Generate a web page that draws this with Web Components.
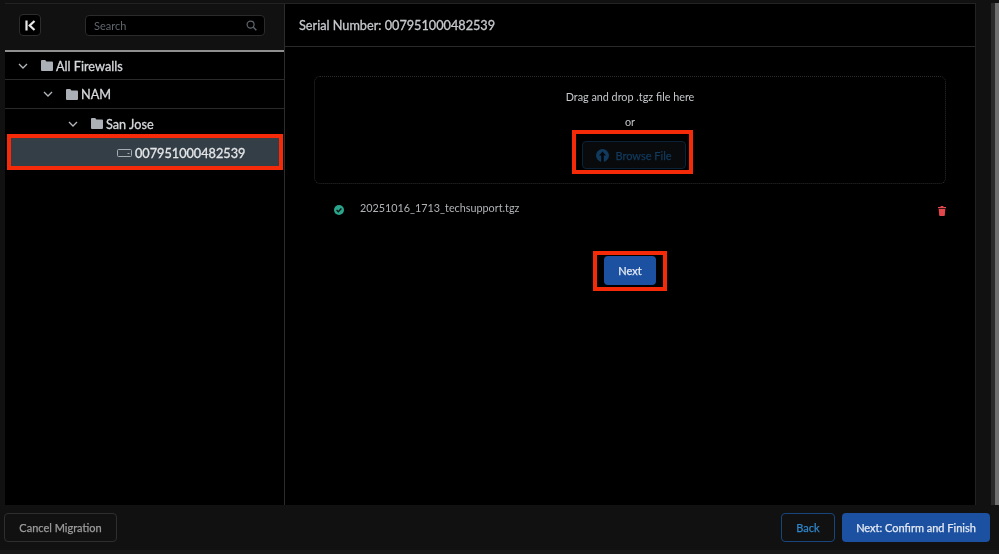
<!DOCTYPE html>
<html><head><meta charset="utf-8"><title>Migration</title>
<style>
html,body{margin:0;height:100%;background:#111}
body{font-family:Lato,"Noto Sans",sans-serif;overflow:hidden}
</style></head><body>
<migration-app></migration-app>
<script>
const def=(name,html,init)=>{customElements.define(name,class extends HTMLElement{
  constructor(){super();this.attachShadow({mode:'open'}).innerHTML=html;}
  connectedCallback(){init&&init(this)}
})};
const FOLDER='<svg width="12" height="11" viewBox="0 0 12 11"><path fill="#aab0b6" d="M0 1.2C0 .5.5 0 1.2 0h3l1.2 1.5h5.400c.7 0 1.200.5 1.200 1.200v7c0 .7-.5 1.300-1.200 1.300H1.200C.5 11 0 10.400 0 9.700z"/></svg>';
const CHEV='<svg width="10" height="6" viewBox="0 0 10 6"><path d="M1 1l4 4 4-4" fill="none" stroke="#b4b8bc" stroke-width="1.300"/></svg>';

def('tree-row',`<style>
:host{display:flex;align-items:center;height:28px;border-bottom:1px solid #2a2a2a;color:#d6d9dc;font-size:12.700px;-webkit-text-stroke:.3px currentColor}
:host([selected]){background:#343e46;border-bottom:0;color:#e4e6e8;margin:0 5px 0 6px;height:26px;padding-top:2px}
.chev{width:10px;display:flex;margin-right:13px}
.ico{display:flex;margin-right:3px}
</style><span class="chev"><slot name="chev"></slot></span><span class="ico"><slot name="icon"></slot></span><slot></slot>`,
el=>{el.style.paddingLeft=el.getAttribute('indent')+'px'});

def('tree-panel',`<style>
:host{display:flex;flex-direction:column;width:279px;flex:none;border-right:1px solid #2c2c2c;background:#000}
header{display:flex;align-items:center;height:42px;padding-bottom:4px;background:#111;border-bottom:2px solid #8f8f8f;padding-left:14px;gap:44px}
.k{width:20px;height:20px;background:#000;border:1px solid #2c2c2c;border-radius:4px;display:flex;align-items:center;justify-content:center}
.s{width:180px;height:21px;box-sizing:border-box;background:#000;border:1px solid #2b2b2b;border-radius:4px;display:flex;align-items:center;justify-content:space-between;padding:0 7px 0 8px;color:#5f666c;font-size:11px}
</style>
<header>
<span class="k"><svg width="11" height="11" viewBox="0 0 11 11"><path d="M1.500 .5v10" stroke="#e8e8e8" stroke-width="2.200"/><path d="M9.500 1L4.700 5.500l4.800 4.500" fill="none" stroke="#e8e8e8" stroke-width="2.200"/></svg></span>
<span class="s">Search<svg width="11" height="11" viewBox="0 0 12 12"><circle cx="5" cy="5" r="3.800" fill="none" stroke="#5f666c" stroke-width="1.300"/><path d="M8 8l3.300 3.300" stroke="#5f666c" stroke-width="1.500"/></svg></span>
</header>
<slot></slot>`);

def('ui-button',`<style>
:host{display:inline-flex;align-items:center;justify-content:center;gap:6px;box-sizing:border-box;height:29px;border-radius:4px;font-size:11px;white-space:nowrap;border:1px solid transparent;-webkit-text-stroke:.25px currentColor}
:host([kind=primary]){background:#1c50a0;color:#e4eaf4}
:host([kind=outline]){border-color:#17467c;color:#2f85c8}
:host([kind=ghost]){border-color:#2e2e2e;color:#9c9c9c}
:host([kind=disabled]){border-color:#0c2238;color:#123a5e;background:#080a0c;height:28px}
</style><slot></slot>`);

def('upload-zone',`<style>
:host{display:flex;flex-direction:column;align-items:center;box-sizing:border-box;height:108px;margin:0 29px 0 29px;border:1px dotted #2c2c2c;border-radius:6px;color:#c6c9cc;font-size:10.800px;padding-top:13px}
p{margin:0;line-height:14px}
.or{margin-top:11px}
.b{margin-top:12px;transform:translateX(4px)}
</style><p>Drag and drop .tgz file here</p><p class="or">or</p><div class="b"><slot></slot></div>`);

def('file-row',`<style>
:host{display:flex;align-items:center;height:14px;margin:18px 29px 0 49px;color:#b0b3b6;font-size:10.800px}
.t{flex:1;margin-left:16px;position:relative;top:-2px}
svg{flex:none;position:relative;top:1px}
</style><svg width="10" height="10" viewBox="0 0 10 10"><circle cx="5" cy="5" r="5" fill="#2aa58c"/><path d="M2.600 5l1.700 1.700 3.100-3.200" fill="none" stroke="#061512" stroke-width="1.400"/></svg><span class="t"><slot></slot></span>
<svg width="8" height="10" viewBox="0 0 8 10" style="top:2px"><path fill="#e2474c" d="M2.800 0h2.400l.4 1H8v1.200H0V1h2.400zM.7 3h6.600l-.5 6.300c0 .4-.3.7-.7.700H1.900c-.4 0-.7-.3-.7-.7z"/></svg>`);

def('red-mark',`<style>:host{position:absolute;box-sizing:border-box;border:4px solid #f52a08;pointer-events:none}</style>`,
el=>{const [x,y,w,h]=el.getAttribute('box').split(',');Object.assign(el.style,{left:x+'px',top:y+'px',width:w+'px',height:h+'px'})});

def('migration-app',`<style>
:host{display:flex;flex-direction:column;position:relative;width:999px;height:554px;background:#111;overflow:hidden;filter:blur(.3px)}
.top{display:flex;height:502px;margin-top:3px;flex:none}
.win{display:flex;width:971px;margin-left:5px;background:#000;border-top:1px solid #222;border-right:1px solid #222;box-sizing:border-box;flex:none}
.main{flex:1;display:flex;flex-direction:column;min-width:0}
.head{height:42px;display:flex;align-items:center;padding-left:14px;border-bottom:1px solid #2a2a2a;color:#c6c9cc;font-size:12.700px;-webkit-text-stroke:.3px currentColor;flex:none}
.body{padding-top:29px;display:flex;flex-direction:column}
.next{align-self:center;margin-top:40px;width:52px}
.sb{width:4px;margin-left:15px;background:#2a2a2a;flex:none}
.sb2{width:4px;background:#6e6e6e;flex:none}
footer{height:45px;display:flex;align-items:center;padding:0 9px 0 4px;flex:none}
.ft{flex:1;background:#1b1b1b}
.sp{flex:1}
.back{width:54px;margin-right:7px}
.cancel{width:113px}
.fin{width:148px}
svg{display:block}
</style>
<div class="top"><div class="win">
<tree-panel>
  <tree-row indent="13" style="height:27px">${'<span slot="chev">'+CHEV+'</span><span slot="icon">'+FOLDER+'</span>'}All Firewalls</tree-row>
  <tree-row indent="38">${'<span slot="chev">'+CHEV+'</span><span slot="icon">'+FOLDER+'</span>'}NAM</tree-row>
  <tree-row indent="63" style="border-bottom:0;height:29px">${'<span slot="chev">'+CHEV+'</span><span slot="icon">'+FOLDER+'</span>'}San Jose</tree-row>
  <tree-row indent="83" selected><svg slot="icon" width="15" height="8" viewBox="0 0 15 8"><rect x=".5" y=".5" width="14" height="7" rx="1" fill="none" stroke="#a8adb2"/><path d="M10.500 4.500h2" stroke="#a8adb2"/></svg>007951000482539</tree-row>
</tree-panel>
<section class="main">
  <div class="head">Serial Number: 007951000482539</div>
  <div class="body">
    <upload-zone><ui-button kind="disabled" style="width:104px"><svg width="13" height="13" viewBox="0 0 13 13"><circle cx="6.500" cy="6.500" r="6.500" fill="#123a5e"/><path d="M6.500 2.500L3 6.500h2.200V13h2.600V6.500H10z" fill="#050809"/></svg>Browse File</ui-button></upload-zone>
    <file-row>20251016_1713_techsupport.tgz</file-row>
    <ui-button class="next" kind="primary">Next</ui-button>
  </div>
</section>
</div><div class="sb"></div><div class="sb2"></div></div>
<footer>
  <ui-button class="cancel" kind="ghost">Cancel Migration</ui-button>
  <span class="sp"></span>
  <ui-button class="back" kind="outline">Back</ui-button>
  <ui-button class="fin" kind="primary">Next: Confirm and Finish</ui-button>
</footer>
<div class="ft"></div>
<red-mark box="7,134,276,36"></red-mark>
<red-mark box="572,130,121,44"></red-mark>
<red-mark box="593,251,74,40"></red-mark>`);
</script>
</body></html>
